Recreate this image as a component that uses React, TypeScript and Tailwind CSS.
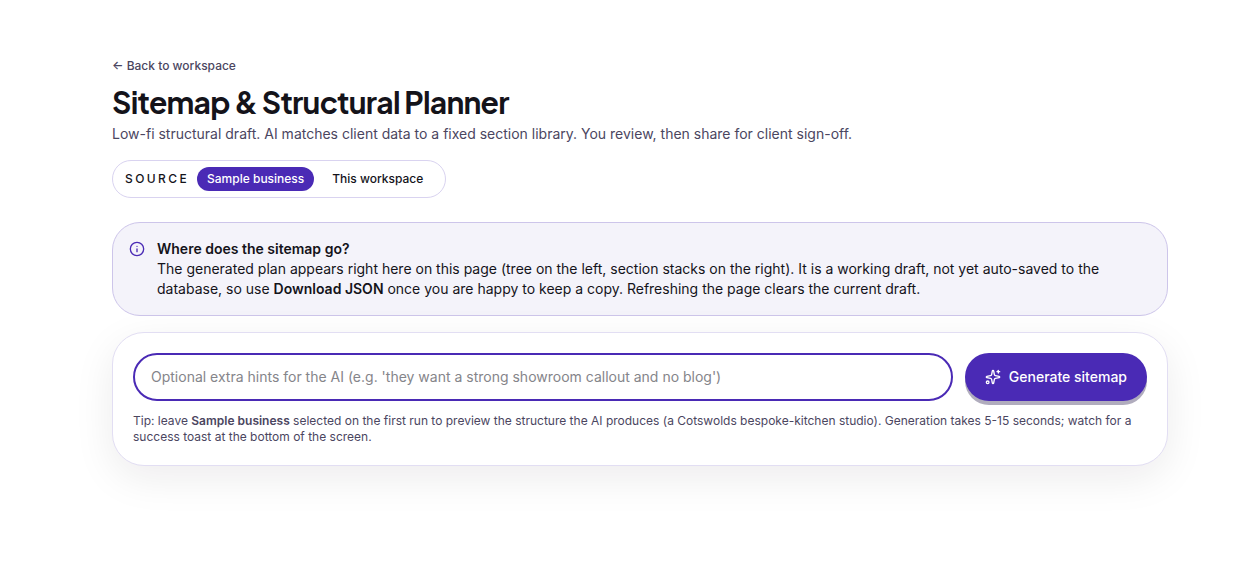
import { useState } from "react";
import { Info, Sparkles } from "lucide-react";

const sources = ["Sample business", "This workspace"];

export default function App() {
  const [source, setSource] = useState(sources[0]);
  const [hints, setHints] = useState("");

  return (
    <main className="ml-16 max-w-6xl px-12 pt-14 pb-16 font-['Inter',sans-serif] text-[#14131a] antialiased">
      <header className="flex flex-col items-start">
        <a href="#workspace" className="text-xs/5 font-medium text-[#4b465f]">
          ← Back to workspace
        </a>
        <h1 className="mt-2 font-['Plus_Jakarta_Sans','Inter',sans-serif] text-3xl/9 font-bold tracking-tight">
          Sitemap &amp; Structural Planner
        </h1>
        <p className="mt-1 text-sm/5 text-[#4b465f]">
          Low-fi structural draft. AI matches client data to a fixed section library. You review, then share for client sign-off.
        </p>
        <div role="group" aria-label="Source" className="mt-4 flex items-center gap-2 rounded-full border border-[#d9d3f0] px-3 py-1.5 text-xs font-medium">
          <span className="tracking-[0.2em] uppercase">Source</span>
          {sources.map((name) => (
            <button
              key={name}
              type="button"
              aria-pressed={source === name}
              onClick={() => setSource(name)}
              className={source === name ? "rounded-full bg-[#4a2ab5] px-2.5 py-1 text-white" : "rounded-full px-2.5 py-1"}
            >
              {name}
            </button>
          ))}
        </div>
      </header>

      <section className="mt-6 flex gap-3 rounded-[28px] border border-[#cdc5ea] bg-[#f4f3fa] px-4 py-4 text-sm/5">
        <Info className="mt-0.5 size-4 shrink-0 text-[#4a2ab5]" />
        <div>
          <h2 className="font-semibold">Where does the sitemap go?</h2>
          <p>
            The generated plan appears right here on this page (tree on the left, section stacks on the right). It is a working draft, not yet auto-saved to the database, so use <strong className="font-semibold">Download JSON</strong> once you are happy to keep a copy. Refreshing the page clears the current draft.
          </p>
        </div>
      </section>

      <section className="mt-4 rounded-[32px] border border-[#e2def3] bg-white p-5 shadow-[0_12px_40px_rgba(20,18,31,0.08)]">
        <form className="flex gap-3" onSubmit={(e) => e.preventDefault()}>
          <input
            type="text"
            aria-label="Optional extra hints"
            value={hints}
            onChange={(e) => setHints(e.target.value)}
            placeholder="Optional extra hints for the AI (e.g. 'they want a strong showroom callout and no blog')"
            className="h-12 min-w-0 flex-1 rounded-full border-2 border-[#4a2ab5] px-4 pb-0.5 text-sm outline-none placeholder:text-[#85858a]"
          />
          <button type="submit" className="flex h-12 items-center gap-2 rounded-full bg-[#4a2ab5] px-5 text-sm font-medium text-white shadow-[0_4px_0_#b0acbd]">
            <Sparkles className="size-4" />
            Generate sitemap
          </button>
        </form>
        <p className="mt-3 text-xs/4 text-[#4b465f]">
          Tip: leave <strong className="font-semibold">Sample business</strong> selected on the first run to preview the structure the AI produces (a Cotswolds bespoke-kitchen studio). Generation takes 5-15 seconds; watch for a success toast at the bottom of the screen.
        </p>
      </section>
    </main>
  );
}
